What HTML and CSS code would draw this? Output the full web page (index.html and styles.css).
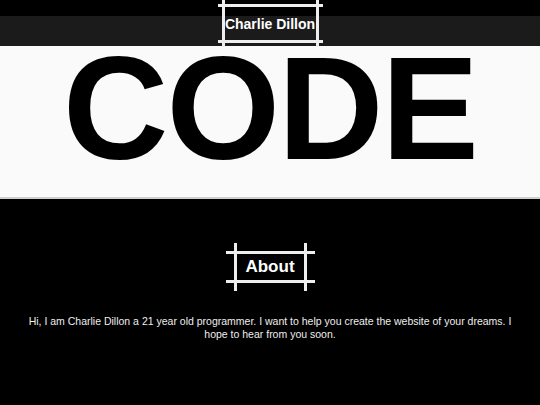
FILE: index.html
```html
<!DOCTYPE html>
<html>
<head>
<meta charset="utf-8">
<link rel="stylesheet" href="styles.css">
</head>
<body>
<header class="site-header">
  <div class="frame title-frame"><span>Charlie Dillon</span></div>
</header>
<section class="hero">
  <div class="hero-word">CODE</div>
</section>
<main class="about">
  <div class="frame about-frame"><span>About</span></div>
  <p class="about-text">Hi, I am Charlie Dillon a 21 year old programmer. I want to help you create the website of your dreams. I hope to hear from you soon.</p>
</main>
</body>
</html>
```

FILE: styles.css
```css
* { box-sizing: border-box; }
html, body { margin: 0; padding: 0; }
body {
  background: #000;
  color: #fff;
  font-family: "Liberation Sans", Arial, sans-serif;
  width: 540px;
  height: 405px;
  overflow: hidden;
}
.site-header {
  height: 46px;
  background: linear-gradient(#000 0, #000 16px, #1b1b1b 16px, #1b1b1b 100%);
  display: flex;
  justify-content: center;
  align-items: flex-start;
}
.frame {
  position: relative;
  display: flex;
  align-items: center;
  justify-content: center;
  font-weight: bold;
  color: #fff;
  white-space: nowrap;
}
.frame::before,
.frame::after {
  content: "";
  position: absolute;
  pointer-events: none;
}
.frame::before {
  border-top: 3px solid #eee;
  border-bottom: 3px solid #eee;
}
.frame::after {
  border-left: 3px solid #eee;
  border-right: 3px solid #eee;
}
.title-frame {
  margin-top: 4px;
  width: 97px;
  height: 39px;
  font-size: 14px;
  padding-top: 1px;
}
.title-frame::before { top: 0; bottom: 0; left: -4px; right: -4px; }
.title-frame::after { left: 0; right: 0; top: -4px; bottom: -4px; }

.hero {
  height: 153px;
  background: #fafafa;
  border-bottom: 2px solid #cfcfcf;
  display: flex;
  justify-content: center;
  align-items: flex-start;
}
.hero-word {
  color: #000;
  font-family: "Liberation Sans", Arial, sans-serif;
  font-weight: bold;
  font-size: 146px;
  line-height: 120px;
  margin-top: 3px;
  letter-spacing: -2px;
}
.about {
  display: flex;
  flex-direction: column;
  align-items: center;
  padding-top: 52px;
}
.about-frame {
  width: 73px;
  height: 32px;
  font-size: 17px;
}
.about-frame::before { top: 0; bottom: 0; left: -8px; right: -8px; }
.about-frame::after { left: 0; right: 0; top: -8px; bottom: -8px; }
.about-text {
  margin: 32px 0 0;
  padding: 0 20px;
  text-align: center;
  font-size: 10.5px;
  line-height: 13px;
  color: #eee;
}
```
